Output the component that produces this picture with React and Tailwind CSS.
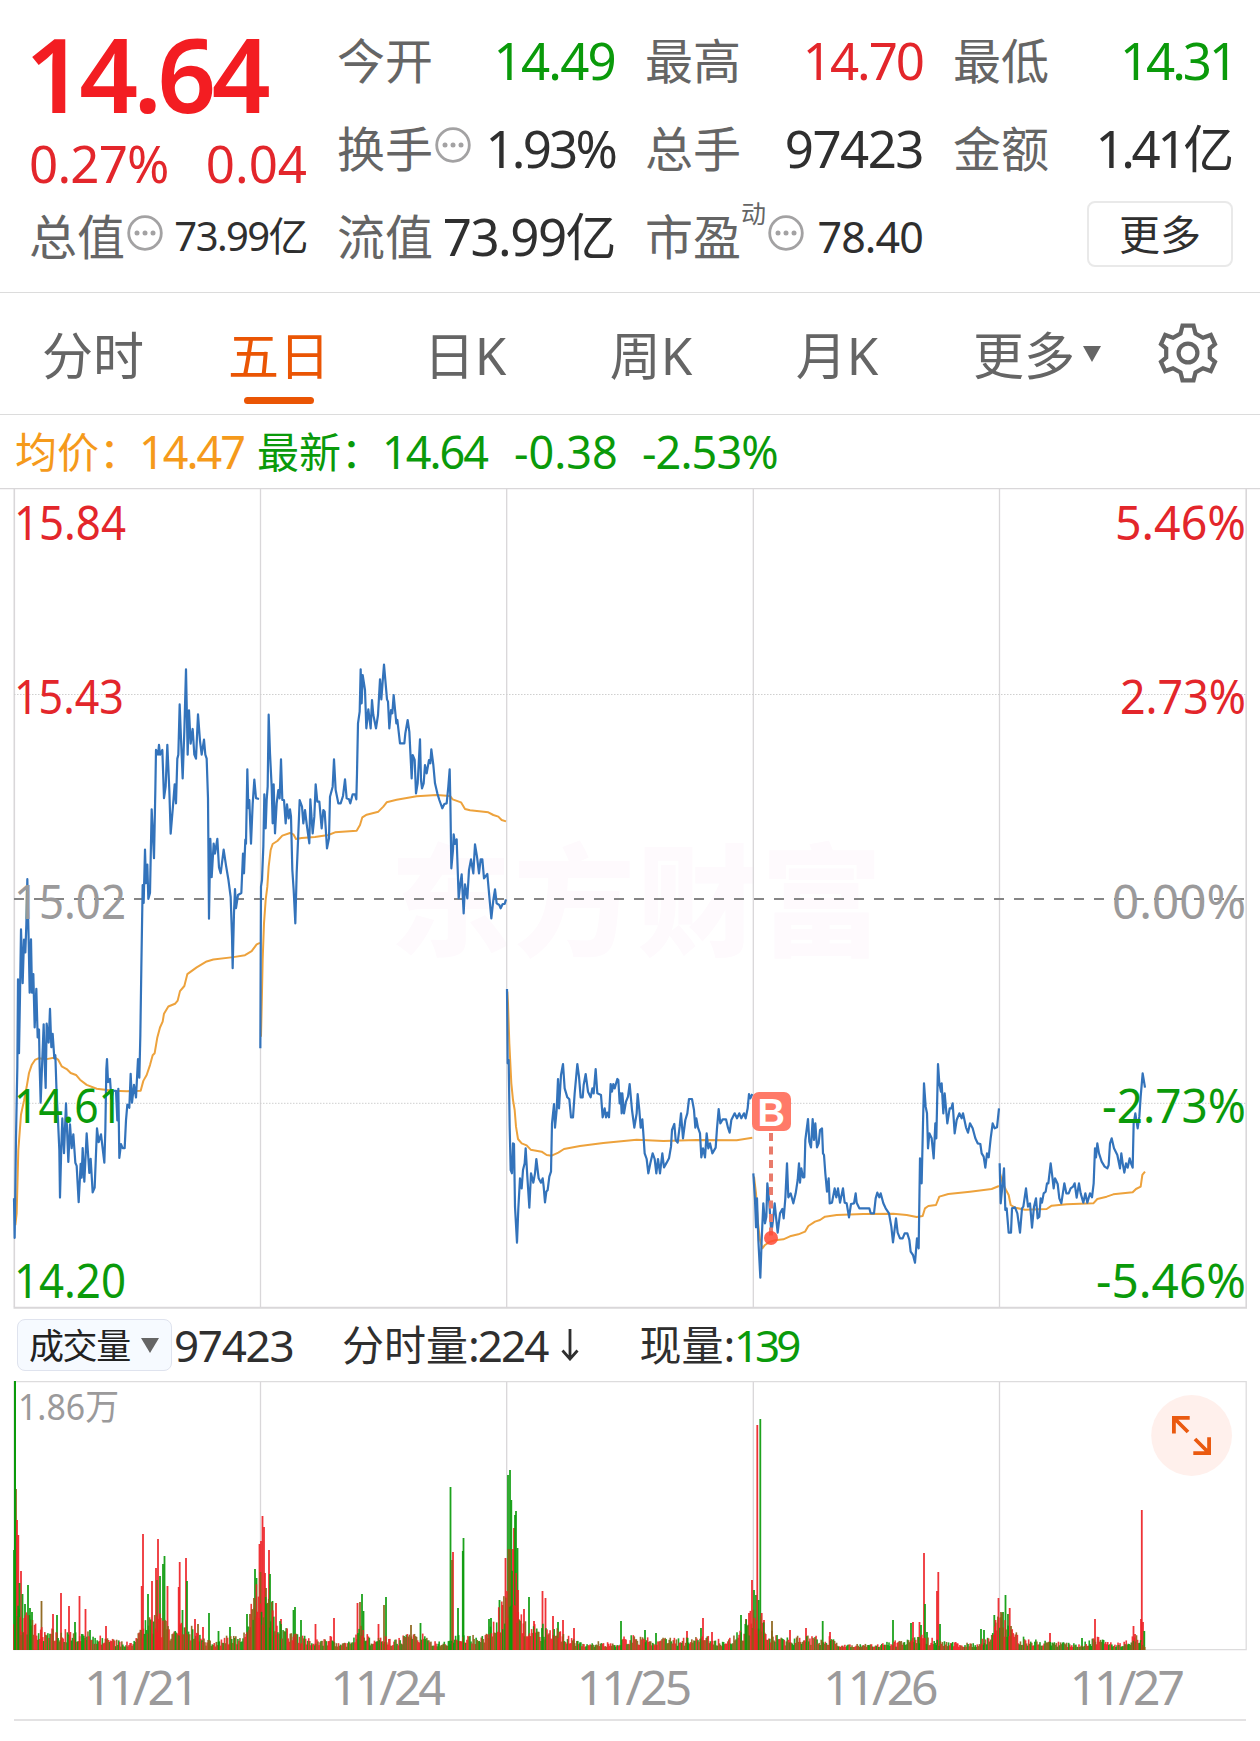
import React from 'react';

const RED = '#e3262b';
const GREEN = '#0a9a0a';

const quotes = [
  [
    { label: '今开', value: '14.49', tone: 'text-[#0a9a0a]', tracking: 'tracking-[-0.035em]' },
    { label: '换手', value: '1.93%', info: true, tracking: 'tracking-[-0.055em]' },
    { label: '流值', value: '73.99亿' },
  ],
  [
    { label: '最高', value: '14.70', tone: 'text-[#e3262b]', tracking: 'tracking-[-0.04em]' },
    { label: '总手', value: '97423' },
    { label: '市盈', value: '78.40', info: true, sup: '动', small: true, tracking: 'tracking-[-0.02em]' },
  ],
];

const tabs = [
  { name: '分时', width: 'w-[186px]' },
  { name: '五日', width: 'w-[186px]', active: true },
  { name: '日K', width: 'w-[186px]' },
  { name: '周K', width: 'w-[186px]' },
  { name: '月K', width: 'w-[186px]' },
];

const dates = ['11/21', '11/24', '11/25', '11/26', '11/27'];

// each day has its own origin and scale, points are x,y pairs
const days = [
  {
    transform: 'translate(0 640) scale(0.33333 0.39541)',
    price:
      '42,1412 44,1512 48,1260 52,1080 54,858 57,1045 60,900 63,732 68,868 72,758 76,790 79,720 82,605 86,760 89,892 93,757 96,892 100,845 104,980 109,882 113,1005 117,985 119,1080 122,1170 126,1080 131,972 134,1070 137,1133 140,970 146,1018 150,933 154,1030 158,996 163,1058 166,1050 170,1150 174,1215 178,1290 180,1410 184,1280 187,1210 192,1298 198,1172 205,1320 210,1225 215,1285 220,1250 226,1322 230,1330 236,1422 242,1325 245,1360 248,1285 253,1370 260,1248 265,1310 268,1348 272,1312 278,1397 284,1385 291,1235 296,1270 303,1250 310,1300 313,1322 316,1240 319,1085 321,1060 324,1118 330,1110 334,1160 340,1140 348,1140 352,1215 355,1135 358,1310 363,1275 368,1285 374,1285 378,1215 382,1175 388,1183 392,1097 396,1170 402,1125 408,1157 414,1060 418,1107 421,1000 424,830 428,620 431,665 435,530 438,615 442,568 445,655 450,640 455,428 462,552 466,380 468,278 474,290 477,265 480,290 487,278 492,400 497,370 502,265 508,380 512,490 518,430 524,365 528,413 532,300 535,290 539,163 543,250 548,350 553,230 558,74 563,290 567,178 572,262 578,225 583,290 588,300 594,188 600,255 605,290 612,252 616,290 620,300 624,400 627,705 631,503 635,600 641,515 645,540 652,503 657,575 662,590 671,530 678,570 685,605 692,650 696,750 698,830 702,690 705,630 708,678 714,645 724,640 729,540 732,590 736,505 738,515 742,327 745,425 748,405 753,515 758,415 763,353 768,400 777,402',
    avg: '46,1480 50,1450 55,1290 63,1200 72,1165 80,1130 87,1095 95,1075 105,1062 115,1058 140,1060 165,1056 175,1062 185,1078 200,1085 212,1095 228,1100 240,1112 260,1125 290,1135 340,1140 380,1141 422,1140 430,1115 440,1100 450,1075 458,1050 464,1045 472,1005 480,980 488,965 492,945 505,927 525,920 533,912 540,888 553,875 562,845 590,828 620,813 640,808 700,802 735,797 755,787 770,770 780,766',
  },
  {
    transform: 'translate(250 640) scale(0.33333)',
    price:
      '31,1225 33,740 36,720 40,620 43,463 47,565 50,480 53,440 56,224 60,340 65,440 68,550 71,433 75,580 80,490 85,450 89,475 93,358 97,480 102,480 107,550 111,493 116,535 120,508 123,530 127,690 131,750 136,850 140,700 145,580 149,480 156,500 160,550 165,510 171,560 178,610 181,478 188,580 193,530 197,433 202,485 208,485 215,565 220,510 224,515 231,625 237,595 240,470 248,440 252,358 257,450 265,490 272,490 279,468 285,418 290,475 297,478 301,490 308,463 315,463 319,478 321,400 324,250 329,215 332,88 335,190 338,105 345,150 349,265 355,208 362,265 366,180 370,225 378,265 384,225 390,118 394,178 398,125 402,74 406,120 411,178 414,185 418,265 423,210 427,220 431,165 439,250 442,240 450,310 463,310 466,280 473,240 478,275 485,415 488,345 494,360 498,460 503,430 510,298 513,420 516,445 521,430 525,375 530,400 537,360 541,370 544,328 550,375 555,430 562,460 568,480 577,505 583,492 590,490 595,440 599,388 601,480 604,685 609,630 611,583 615,612 620,598 626,775 631,730 635,703 641,820 645,733 652,775 657,690 663,658 670,700 675,613 681,650 687,700 692,658 697,658 702,715 712,702 718,770 724,835 730,780 735,748 740,790 748,795 752,805 758,792 764,792 768,778',
    avg: '33,1190 35,1100 38,960 42,850 47,780 52,740 56,680 62,630 68,612 82,603 97,587 120,579 130,583 138,597 155,594 195,591 235,585 255,577 320,572 330,555 337,532 350,524 385,515 400,500 410,487 440,479 500,469 560,465 600,468 608,478 633,487 645,507 660,511 715,517 730,525 745,530 755,540 768,544',
  },
  {
    transform: 'translate(490 960) scale(0.33333)',
    price:
      '51,87 53,310 56,300 59,500 62,630 66,640 69,550 72,552 75,740 81,848 85,745 90,655 95,685 99,630 104,610 107,565 112,650 118,743 123,640 130,668 135,640 139,597 146,655 153,668 158,655 161,680 165,727 169,695 173,690 178,650 183,635 186,490 192,432 195,503 200,450 204,357 207,445 213,345 219,312 224,385 232,412 238,418 243,472 249,472 254,400 262,312 267,350 272,412 278,412 281,375 287,342 294,395 302,412 307,385 311,400 317,327 322,400 333,405 338,472 344,445 348,472 352,458 357,472 362,372 366,395 370,372 374,385 382,357 385,360 389,430 392,400 395,460 397,400 402,460 408,425 414,410 419,372 426,450 433,503 440,460 443,402 448,450 452,503 457,478 460,520 464,580 470,597 475,640 481,610 488,580 494,597 499,640 504,597 510,640 517,580 522,622 530,608 537,595 543,560 546,510 553,492 557,540 563,548 569,500 573,460 579,535 586,480 592,460 597,417 606,417 612,450 616,503 619,475 624,503 630,520 634,592 639,565 645,592 650,520 655,565 660,550 667,580 677,563 681,505 686,447 691,490 698,478 708,478 714,503 719,518 724,480 734,460 741,475 748,460 754,475 762,460 767,475 773,445 777,402 781,415 787,402',
    avg: '52,95 54,130 58,250 64,370 69,420 74,450 78,500 84,537 95,550 110,556 122,569 155,575 170,585 185,587 205,578 222,567 270,558 340,549 440,539 520,543 620,540 740,541 787,533',
  },
  {
    transform: 'translate(740 1040) scale(0.33333)',
    price:
      '40,400 45,480 48,562 51,475 55,600 61,713 65,600 70,490 75,550 79,530 82,430 88,490 94,580 99,540 104,490 108,530 113,578 120,520 127,507 131,535 136,475 141,370 145,472 152,460 160,490 167,460 173,420 177,370 180,428 184,385 189,412 193,412 196,300 204,237 208,305 213,322 218,237 222,300 226,250 231,322 236,310 240,270 246,265 249,340 252,345 256,400 261,455 266,415 269,490 276,488 284,445 289,472 294,445 300,488 309,445 314,488 320,490 327,532 333,492 342,490 347,460 350,488 358,505 388,505 392,520 402,520 407,475 412,458 418,472 422,460 430,490 437,505 447,520 454,560 459,607 468,535 473,578 480,595 488,595 494,580 502,580 508,600 512,635 519,645 525,668 531,595 536,625 540,355 545,430 549,250 552,130 557,200 561,220 564,325 568,280 575,295 581,355 586,250 589,295 594,72 598,130 603,155 605,130 610,220 614,160 622,250 629,205 634,205 638,190 644,280 650,240 658,220 665,235 669,220 678,262 684,278 690,250 698,265 706,295 713,310 721,312 725,340 731,350 736,383 741,340 746,352 752,295 758,250 764,265 771,262 777,205',
    avg: '42,410 48,460 53,540 60,600 67,625 75,615 90,605 105,601 130,598 150,589 175,583 195,575 205,558 225,545 240,540 255,530 290,525 370,522 460,521 500,525 530,531 548,528 555,505 565,498 588,495 598,470 625,462 690,455 755,447 777,438',
  },
  {
    transform: 'translate(980 1040) scale(0.33333)',
    price:
      '59,370 62,490 67,440 72,385 76,510 80,505 86,578 93,578 96,505 105,502 112,520 120,578 126,505 130,500 138,445 144,500 150,490 156,563 162,500 168,475 173,535 178,530 182,475 186,488 191,460 197,455 201,430 205,430 212,370 217,410 221,445 225,415 233,432 238,475 244,490 253,430 259,460 266,460 272,445 279,440 284,430 290,473 297,430 302,460 310,488 316,460 322,488 330,460 336,472 341,430 345,325 348,352 352,310 357,340 365,365 374,380 382,385 386,375 390,310 395,295 402,325 412,345 420,385 424,340 428,370 433,398 438,370 443,383 449,355 453,370 458,383 461,250 466,220 473,265 478,230 482,170 488,100 493,130 495,143',
    avg: '60,400 68,430 78,450 86,465 92,495 105,503 135,509 200,507 215,497 260,493 340,490 352,477 380,470 400,463 458,457 468,447 482,440 487,405 495,395',
  },
];

const leftLabels = [
  { text: '15.84', y: 540, w: 112, fill: RED },
  { text: '15.43', y: 714, w: 110, fill: RED },
  { text: '15.02', y: 919, w: 112, fill: '#9b9a9b' },
  { text: '14.61', y: 1123, w: 109, fill: GREEN },
  { text: '14.20', y: 1298, w: 112, fill: GREEN },
];

const rightLabels = [
  { text: '5.46%', y: 540, w: 131, fill: RED },
  { text: '2.73%', y: 714, w: 126, fill: RED },
  { text: '0.00%', y: 919, w: 134, fill: '#9b9a9b' },
  { text: '-2.73%', y: 1123, w: 144, fill: GREEN },
  { text: '-5.46%', y: 1298, w: 150, fill: GREEN },
];

// usual height of the volume bars along x
const envelope = [
  [14, 50], [25, 38], [40, 25], [60, 20], [80, 22], [95, 15], [110, 12], [125, 8], [135, 10], [145, 40], [165, 35],
  [172, 15], [185, 30], [200, 15], [215, 8], [225, 14], [240, 16], [250, 42], [257, 65], [268, 60], [275, 35],
  [288, 20], [300, 15], [320, 10], [330, 14], [340, 6], [352, 10], [362, 25], [372, 10], [385, 15], [395, 10],
  [410, 18], [420, 20], [430, 8], [445, 10], [455, 15], [470, 14], [485, 16], [495, 30], [505, 60], [515, 90],
  [520, 35], [535, 25], [560, 25], [572, 12], [585, 6], [600, 9], [615, 6], [628, 16], [650, 12], [690, 12],
  [705, 15], [725, 10], [740, 20], [755, 45], [765, 25], [780, 12], [800, 14], [830, 14], [840, 5], [880, 7],
  [900, 10], [920, 15], [935, 12], [960, 8], [975, 7], [990, 18], [1000, 45], [1012, 20], [1025, 12], [1060, 8],
  [1080, 6], [1100, 14], [1115, 6], [1140, 18], [1145, 3],
];

const colors = { r: '#ee2226', g: '#0a9a0a', b: '#8a5f14' };

const spikes = [
  [14, 100, 'g'], [16, 161, 'b'], [17, 130, 'r'], [18.3, 115, 'r'], [21, 79, 'r'], [19.5, 67, 'g'], [28, 65, 'g'],
  [22.5, 56, 'g'], [25, 46, 'g'], [30, 42, 'g'], [32, 38, 'g'], [41.5, 49, 'b'], [53, 36, 'r'], [57, 35, 'g'],
  [61, 57, 'r'], [69, 44, 'r'], [75, 28, 'g'], [79.5, 54, 'r'], [85.5, 41, 'r'], [90, 20, 'g'], [106, 24, 'r'],
  [141.7, 64, 'r'], [143, 116, 'r'], [148, 56, 'g'], [152, 69, 'r'], [156, 82, 'r'], [158, 111, 'r'], [157, 70, 'b'],
  [160, 74, 'g'], [163, 86, 'g'], [164.5, 94, 'g'], [167.5, 64, 'r'], [178.7, 63, 'r'], [179.7, 88, 'r'],
  [182.5, 40, 'g'], [186, 92, 'r'], [187, 69, 'g'], [195, 31, 'r'], [198, 26, 'b'], [203, 23, 'r'], [209, 37, 'g'],
  [218.5, 19, 'g'], [230, 23, 'g'], [247, 36, 'g'], [250, 36, 'b'], [255, 81, 'g'], [256.5, 72, 'g'], [254, 52, 'b'],
  [259.5, 106, 'r'], [261, 109, 'r'], [262.5, 134, 'r'], [264, 123, 'r'], [260.5, 78, 'b'], [265, 77, 'r'],
  [266, 62, 'b'], [269, 100, 'r'], [270, 76, 'g'], [272.5, 49, 'g'], [276, 47, 'r'], [281, 31, 'r'], [293.5, 40, 'g'],
  [295, 43, 'g'], [301, 30, 'g'], [315.5, 26, 'r'], [334, 32, 'r'], [357.5, 47, 'r'], [360, 48, 'b'], [362, 56, 'g'],
  [363.5, 39, 'g'], [378.5, 26, 'r'], [384, 45, 'b'], [386, 53, 'g'], [411, 25, 'b'], [420.5, 27, 'g'],
  [450.5, 163, 'g'], [453, 98, 'r'], [452, 90, 'b'], [458, 42, 'g'], [463.5, 112, 'g'], [462.8, 99, 'g'],
  [489, 31, 'g'], [491, 32, 'g'], [499.5, 50, 'g'], [502.5, 45, 'r'], [505.5, 92, 'r'], [508, 175, 'g'],
  [510, 180, 'g'], [511.3, 150, 'g'], [508.5, 101, 'b'], [510, 101, 'b'], [513, 101, 'r'], [514, 122, 'r'],
  [515, 135, 'g'], [516, 139, 'g'], [517.5, 102, 'g'], [518, 60, 'r'], [524, 41, 'r'], [529, 53, 'g'],
  [534, 29, 'r'], [542.5, 59, 'r'], [545.5, 52, 'r'], [553, 34, 'r'], [558, 28, 'g'], [563, 30, 'r'], [574, 22, 'r'],
  [621, 29, 'g'], [645, 20, 'g'], [656, 17, 'g'], [687, 19, 'r'], [701, 22, 'g'], [703, 32, 'r'], [712, 18, 'r'],
  [741, 35, 'g'], [746, 31, 'r'], [749, 37, 'r'], [752, 70, 'r'], [754, 60, 'g'], [756, 55, 'g'], [757.3, 225, 'r'],
  [758.7, 50, 'g'], [760.3, 231, 'g'], [761.7, 37, 'r'], [764, 30, 'r'], [772, 29, 'b'], [790, 20, 'r'],
  [806, 22, 'r'], [822.7, 29, 'g'], [830, 18, 'r'], [893, 30, 'g'], [911, 27, 'g'], [913, 28, 'r'], [919.5, 28, 'r'],
  [921, 25, 'g'], [924, 97, 'r'], [925, 46, 'g'], [927, 18, 'g'], [937, 59, 'r'], [938.3, 78, 'r'], [940, 26, 'g'],
  [981, 21, 'g'], [984, 20, 'g'], [994.3, 35, 'g'], [995.5, 30, 'r'], [998.5, 52, 'r'], [1001, 38, 'b'],
  [1003, 38, 'g'], [1005.5, 55, 'g'], [1008, 36, 'g'], [1009.7, 42, 'r'], [1011, 24, 'b'], [1050, 17, 'r'],
  [1082, 12, 'g'], [1095, 31, 'r'], [1133.5, 24, 'r'], [1135, 16, 'r'], [1141, 31, 'r'], [1141.8, 140, 'r'],
  [1143, 28, 'r'], [1144.3, 19, 'g'],
];

function buildBars() {
  let seed = 17;
  const rand = () => {
    seed = (seed * 16807) % 2147483647;
    return seed / 2147483647;
  };
  const bars = [];
  let k = 0;
  for (let x = 14; x < 1145; x += 1.027) {
    while (k < envelope.length - 2 && envelope[k + 1][0] < x) k++;
    const [x0, h0] = envelope[k];
    const [x1, h1] = envelope[k + 1];
    const top = h0 + ((h1 - h0) * (x - x0)) / (x1 - x0);
    const c = rand();
    bars.push([x, Math.max(3, top * (0.35 + 0.7 * rand())), c < 0.42 ? 'r' : c < 0.7 ? 'g' : 'b']);
  }
  return bars;
}

const bars = buildBars();

const InfoDots = () => (
  <svg width="36" height="36" viewBox="0 0 36 36" className="shrink-0">
    <circle cx="18" cy="18" r="16.3" fill="none" stroke="#a3a2a3" strokeWidth="2.8" />
    <circle cx="10" cy="18" r="2.5" fill="#a3a2a3" />
    <circle cx="18" cy="18" r="2.5" fill="#a3a2a3" />
    <circle cx="26" cy="18" r="2.5" fill="#a3a2a3" />
  </svg>
);

const Quote = ({ label, value, tone = 'text-[#2f2f2f]', tracking = 'tracking-[-0.03em]', info, sup, small }) => (
  <div className="flex h-[88px] items-center justify-between whitespace-nowrap">
    <div className="-ml-0.5 flex items-center pt-0.5 text-[48px] leading-none text-[#656565]">
      <span>{label}</span>
      {sup && <span className="-mt-12 text-[25px] leading-none">{sup}</span>}
      {info && <div className="-mt-2 ml-0.5"><InfoDots /></div>}
    </div>
    <span className={`${small ? 'text-[43px]' : 'text-[51px]'} ${tracking} leading-none ${tone}`}>{value}</span>
  </div>
);

const Gear = () => (
  <svg width="62" height="62" viewBox="-31 -31 62 62" fill="none" stroke="#656565" strokeWidth="4.2">
    <path d="M-5.5-27.3H5.5L7.5-19.5L15-15.2L22.8-18L27-8.8L21.8-4.5V4.5L27 8.8L22.8 18L15 15.2L7.5 19.5L5.5 27.3H-5.5L-7.5 19.5L-15 15.2L-22.8 18L-27 8.8L-21.8 4.5V-4.5L-27-8.8L-22.8-18L-15-15.2L-7.5-19.5Z" />
    <circle r="9.4" />
  </svg>
);

const Header = () => (
  <div className="flex h-[293px] gap-8 border-b border-[#dcdcdc] pl-[31px] pr-[28px] pt-4">
    <div className="w-[276px]">
      <div className="-ml-1.5 h-[95px] pt-[17px] text-[103px] font-semibold leading-[80px] tracking-[-0.045em] text-[#f31d22]">14.64</div>
      <div className="-ml-0.5 flex h-[81px] items-center justify-between pt-[23px] text-[51px] leading-none text-[#e3262b]">
        <span className="tracking-[-0.015em]">0.27%</span>
        <span>0.04</span>
      </div>
      <div className="-ml-0.5 flex h-[88px] items-center whitespace-nowrap text-[48px] leading-none text-[#656565]">
        <span className="pt-0.5">总值</span>
        <div className="-mt-1.5 ml-0.5"><InfoDots /></div>
        <span className="ml-auto text-[40px] tracking-[-0.04em] text-[#2f2f2f]">73.99亿</span>
      </div>
    </div>
    {quotes.map((col, i) => (
      <div key={i} className="w-[276px]">
        {col.map((q) => <Quote key={q.label} {...q} />)}
      </div>
    ))}
    <div className="w-[276px]">
      <div className="-mr-1">
        <Quote label="最低" value="14.31" tone="text-[#0a9a0a]" tracking="tracking-[-0.06em]" />
      </div>
      <Quote label="金额" value="1.41亿" tracking="tracking-[-0.065em]" />
      <div className="flex h-[88px] items-center justify-end">
        <button className="-mr-0.5 mb-1 h-[66px] w-[146px] rounded-lg border-2 border-[#e9e9e9] text-[41px] leading-none text-[#2f2f2f]">更多</button>
      </div>
    </div>
  </div>
);

const Tabs = () => (
  <div className="flex h-[122px] border-b border-[#dcdcdc] text-[51px] leading-none text-[#656565]">
    {tabs.map((t) => (
      <div key={t.name} className={`flex flex-col items-center pt-[37px] ${t.width} ${t.active ? 'text-[#ea5504]' : ''}`}>
        <span>{t.name}</span>
        {t.active && <div className="mt-4 h-[7px] w-[70px] rounded-full bg-[#ea5504]" />}
      </div>
    ))}
    <div className="flex pl-[43px] pt-[37px]">
      <span>更多</span>
      <svg width="18" height="16" viewBox="0 0 18 16" className="ml-2 mt-4">
        <path d="M0 0H18L9 16Z" fill="#656565" />
      </svg>
    </div>
    <div className="ml-auto mr-[41px] mt-[29px]"><Gear /></div>
  </div>
);

const Summary = () => (
  <div className="flex h-[73px] items-center whitespace-pre pl-[15px] text-[45px] leading-none tracking-[-0.045em] text-[#0a9a0a]">
    <span className="w-[124px] text-[42px] tracking-normal text-[#f59a1b]">均价：</span>
    <span className="w-[118px] text-[#f59a1b]">14.47</span>
    <span className="w-[125px] text-[42px] tracking-normal">最新：</span>
    <span className="w-[132px]">14.64</span>
    <span className="w-[128px] tracking-normal">-0.38</span>
    <span className="tracking-[-0.02em]">-2.53%</span>
  </div>
);

const PriceChart = () => (
  <svg width="1260" height="821" viewBox="0 488 1260 821" className="block overflow-visible">
    <text x="390" y="946" fontSize="121" fontWeight="900" textLength="492" fill="#fefafd">东方财富</text>
    <g stroke="#d9d7d9" strokeWidth="1.3">
      <path d="M0 488.6H1260" />
      <path d="M260.5 489V1307M506.7 489V1307M753.3 489V1307M999.5 489V1307" />
      <path d="M14.3 489V1307M1246.2 489V1307" strokeWidth="1.6" />
      <path d="M13.5 1307.7H1247" strokeWidth="2" />
    </g>
    <path d="M14 694.5H1246M14 1103.3H1246" stroke="#cfcfcf" strokeDasharray="1.5 1.5" />
    <path d="M14 899H1246" stroke="#858585" strokeWidth="2" strokeDasharray="10 10" />
    <g fill="none" strokeWidth="2.2" strokeLinejoin="round">
      {days.map((d) => (
        <g key={d.transform} transform={d.transform}>
          <polyline points={d.avg} stroke="#eda23c" strokeWidth="2" vectorEffect="non-scaling-stroke" />
          <polyline points={d.price} stroke="#3373bb" vectorEffect="non-scaling-stroke" />
        </g>
      ))}
    </g>
    <g fontSize="47.5">
      {leftLabels.map((l) => (
        <text key={l.text} x="14" y={l.y} textLength={l.w} lengthAdjust="spacingAndGlyphs" fill={l.fill}>{l.text}</text>
      ))}
      {rightLabels.map((l) => (
        <text key={l.text} x={1246 - l.w} y={l.y} textLength={l.w} lengthAdjust="spacingAndGlyphs" fill={l.fill}>{l.text}</text>
      ))}
    </g>
    {/* buy marker */}
    <path d="M771 1133V1238" stroke="#e97b6b" strokeWidth="4" strokeDasharray="8 5.5" />
    <circle cx="771" cy="1238" r="7" fill="#ff4a35" fillOpacity="0.85" />
    <rect x="752" y="1092" width="39" height="39" rx="7" fill="#ff7a68" />
    <text x="771.3" y="1125.5" textAnchor="middle" fontSize="38" fontWeight="700" fill="#fff" className="font-['Liberation_Sans',sans-serif]">B</text>
  </svg>
);

const VolumeBar = () => (
  <div className="flex h-[72px] items-center whitespace-nowrap pl-[17px] text-[44px] leading-none tracking-[-0.03em] text-[#2f2f2f]">
    <button className="flex h-[52px] w-[155px] items-center rounded-lg border border-[#dfe3ee] bg-[#f6faff] pl-[11px] text-[35px] leading-none tracking-[-0.04em] text-[#222]">
      成交量
      <svg width="18" height="15" viewBox="0 0 18 15" className="ml-[11px]">
        <path d="M0 0H18L9 15Z" fill="#656565" />
      </svg>
    </button>
    <span className="ml-0.5 w-[168px]">97423</span>
    <span className="text-[42px] tracking-normal">分时量</span>
    <span className="tracking-[-0.045em]">:224</span>
    <svg width="18" height="32" viewBox="0 0 18 32" fill="none" stroke="#2f2f2f" strokeWidth="2.8" className="ml-3.5">
      <path d="M9 0V30M1.5 21.5L9 30L16.5 21.5" />
    </svg>
    <span className="ml-[60px] text-[42px] tracking-normal">现量</span>
    <span>:</span>
    <span className="tracking-[-0.09em] text-[#0a9a0a]">139</span>
  </div>
);

const VolumeChart = () => (
  <svg width="1260" height="270" viewBox="0 1381 1260 270" className="block">
    <path d="M14 1381.7H1246.2V1649.7H14Z" fill="none" stroke="#dddcdd" strokeWidth="1.3" />
    <path d="M260.5 1382V1650M506.7 1382V1650M753.3 1382V1650M999.5 1382V1650" stroke="#d9d7d9" strokeWidth="1.3" />
    <text x="18" y="1419.5" fontSize="36" textLength="101" lengthAdjust="spacingAndGlyphs" fill="#9b9a9b">1.86万</text>
    {spikes.map(([x, h, c], i) => (
      <rect key={i} x={x - 0.9} y={1650 - h} width="1.8" height={h} fill={colors[c]} fillOpacity="0.92" />
    ))}
    {bars.map(([x, h, c], i) => (
      <rect key={i} x={x - 0.8} y={1650 - h} width="1.6" height={h} fill={colors[c]} fillOpacity="0.9" />
    ))}
    <rect x="14" y="1381" width="2" height="269" fill={GREEN} />
    <circle cx="1191.6" cy="1435.5" r="40.4" fill="#fff0ec" />
    <g fill="none" stroke="#ea5a10" strokeWidth="3.8">
      <path d="M1173.9 1433.5V1417.9H1189.7M1174 1418L1188 1432" />
      <path d="M1209.1 1437.3V1453.1H1193.3M1209 1453L1195 1439" />
    </g>
  </svg>
);

const App = () => (
  <div className="h-[1741px] w-[1260px] overflow-hidden bg-white font-['Noto_Sans','Noto_Sans_CJK_SC',sans-serif]">
    <Header />
    <Tabs />
    <Summary />
    <PriceChart />
    <VolumeBar />
    <VolumeChart />
    <div className="mx-[14px] flex h-[70px] items-center border-b-2 border-[#e3e2e3] pt-1 text-[48px] leading-none tracking-[-0.065em] text-[#9b9a9b]">
      {dates.map((d) => (
        <span key={d} className="w-[246.4px] pl-1.5 text-center">{d}</span>
      ))}
    </div>
  </div>
);

export default App;
